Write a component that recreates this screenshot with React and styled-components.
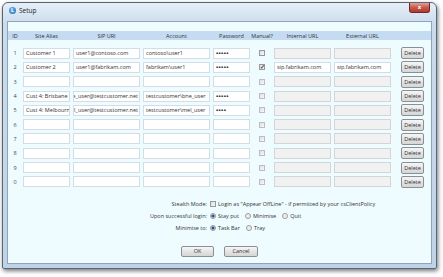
import React from 'react';
import styled, { createGlobalStyle } from 'styled-components';

const GlobalStyle = createGlobalStyle`
  html, body { margin: 0; background: #fff; }
  body { font-family: "Open Sans", "Noto Sans", sans-serif; color: #333; }
`

const COLS = '10px 47px 67px 67px 37px 18px 57px 57px 30px';

const Screen = styled.div`
  width: 443px;
  height: 277px;
  padding: 2px 0 0 2px;
  box-sizing: border-box;
`
const Window = styled.div`
  width: 435px;
  height: 267px;
  box-sizing: border-box;
  border: 1px solid #56677a;
  border-radius: 6px 6px 2px 2px;
  background: linear-gradient(#e6eff8, #cadbeb 22px, #c0d3e6);
  box-shadow: 1px 2px 4px rgba(0, 0, 0, 0.55);
  display: flex;
  flex-direction: column;
  padding: 0 4px 4px 4px;
`
const TitleBar = styled.div`
  height: 18px;
  display: flex;
  align-items: flex-start;
`
const AppIcon = styled.div`
  width: 7px;
  height: 7px;
  margin: 4px 0 0 2px;
  border-radius: 50%;
  background: radial-gradient(circle at 40% 35%, #6fb2e8, #1f6fb8);
  color: #fff;
  font-size: 5px;
  font-weight: bold;
  line-height: 7px;
  text-align: center;
`
const Title = styled.div`
  margin: 3px 0 0 3px;
  font-size: 6.5px;
  line-height: 9px;
  color: #1e1e1e;
`
const CloseBtn = styled.div`
  margin-left: auto;
  margin-right: 2px;
  width: 21px;
  height: 10px;
  box-sizing: border-box;
  border: 1px solid #6e2a26;
  border-top: none;
  border-radius: 0 0 3px 3px;
  background: linear-gradient(#e0a196, #c8584b 50%, #b03a2e);
  color: #fff;
  font-size: 6px;
  font-weight: bold;
  line-height: 9px;
  text-align: center;
`
const Client = styled.div`
  flex: 1;
  border: 1px solid #8ea4bd;
  background: #effcff;
  display: flex;
  flex-direction: column;
`
const HeaderRow = styled.div`
  margin-top: 9px;
  height: 9px;
  background: #c4dbf1;
  display: grid;
  grid-template-columns: ${COLS};
  column-gap: 3px;
  padding-left: 2px;
  align-items: center;
  font-size: 5.5px;
  color: #333;
`
const HeadCell = styled.div`
  justify-self: center;
  white-space: nowrap;
`
const Rows = styled.div`
  padding-top: 7.7px;
  display: grid;
  grid-template-columns: ${COLS};
  grid-auto-rows: 11px;
  column-gap: 3px;
  row-gap: 3.3px;
  padding-left: 2px;
  align-items: center;
  font-size: 5.5px;
`
const Id = styled.div`
  justify-self: center;
  color: #444;
`
const Field = styled.div`
  height: 11px;
  box-sizing: border-box;
  border: 1px solid ${p => (p.$disabled ? '#d3d6d9' : '#d3dde8')};
  background: ${p => (p.$disabled ? '#f1f1f1' : '#fff')};
  padding: 0 1px 0 2px;
  display: flex;
  justify-content: ${p => (p.$scrolled ? 'flex-end' : 'flex-start')};
  align-items: center;
  white-space: nowrap;
  overflow: hidden;
  color: #333;
  letter-spacing: ${p => (p.$dots ? '0.3px' : '0')};
  font-size: ${p => (p.$dots ? '6px' : '5.5px')};
  font-weight: ${p => (p.$dots ? 'bold' : 'normal')};
`
const Caret = styled.span`
  display: inline-block;
  flex: none;
  width: 1px;
  height: 7px;
  background: #111;
`
const Check = styled.div`
  justify-self: center;
  width: 6px;
  height: 6px;
  box-sizing: border-box;
  border: 1px solid ${p => (p.$dim ? '#bdbdbd' : '#999')};
  background: linear-gradient(135deg, #dedede, #f8f8f8);
  position: relative;
`
const Tick = styled.span`
  position: absolute;
  left: 0;
  top: -1px;
  font-size: 6px;
  line-height: 6px;
  font-weight: bold;
  color: #3a3a3a;
`
const Button = styled.div`
  justify-self: end;
  width: ${p => p.$w || 23}px;
  height: ${p => p.$h || 12}px;
  box-sizing: border-box;
  border: 1px solid #8a8f96;
  border-radius: 2px;
  background: linear-gradient(#f6f6f6, #e4e4e4 50%, #d6d6d6);
  font-size: 5.5px;
  line-height: ${p => (p.$h || 12) - 2}px;
  text-align: center;
  color: #333;
`
const Options = styled.div`
  margin-top: 10.6px;
  display: grid;
  grid-template-columns: 199px auto;
  grid-auto-rows: 12px;
  column-gap: 3px;
  align-items: center;
  font-size: 5.5px;
`
const OptLabel = styled.div`
  text-align: right;
  white-space: nowrap;
`
const OptLine = styled.div`
  display: flex;
  align-items: center;
  white-space: nowrap;
`
const Box = styled.span`
  width: 6px;
  height: 6px;
  box-sizing: border-box;
  border: 1px solid #999;
  background: linear-gradient(135deg, #dedede, #f8f8f8);
  margin-right: 2px;
`
const Radio = styled.span`
  width: 6px;
  height: 6px;
  box-sizing: border-box;
  border-radius: 50%;
  border: 1px solid #999;
  background: ${p => (p.$on
    ? 'radial-gradient(circle, #2f4f7a 0 1.4px, #9bb6d8 1.6px 2px, #eee 2.2px)'
    : 'radial-gradient(circle, #e8e8e8, #fafafa)')};
  margin-right: 2px;
`
const Choice = styled.span`
  display: inline-flex;
  align-items: center;
  margin-right: 6px;
`
const Footer = styled.div`
  margin-top: 12px;
  display: flex;
  justify-content: center;
  gap: 10px;
`

const rows = [
  { id: '1', alias: 'Customer 1', sip: 'user1@contoso.com', acct: 'contoso\\user1', pw: '•••••' },
  { id: '2', alias: 'Customer 2', sip: 'user1@fabrikam.com', acct: 'fabrikam\\user1', pw: '•••••', manual: true, int: 'sip.fabrikam.com', ext: 'sip.fabrikam.com' },
  { id: '3' },
  { id: '4', alias: 'Cust 4: Brisbane', sip: 'e_user@testcustomer.net', scrolled: true, acct: 'testcustomer\\bne_user', pw: '•••••' },
  { id: '5', alias: 'Cust 4: Melbourn', caret: true, sip: 'l_user@testcustomer.net', scrolled: true, acct: 'testcustomer\\mel_user', pw: '••••' },
  { id: '6' },
  { id: '7' },
  { id: '8' },
  { id: '9' },
  { id: '0' },
];

const headers = ['ID', 'Site Alias', 'SIP URI', 'Account', 'Password', 'Manual?', 'Internal URL', 'External URL', ''];

export default function App() {
  return (
    <Screen>
      <GlobalStyle />
      <Window>
        <TitleBar>
          <AppIcon>L</AppIcon>
          <Title>Setup</Title>
          <CloseBtn>x</CloseBtn>
        </TitleBar>
        <Client>
          <HeaderRow>
            {headers.map((h, i) => <HeadCell key={i}>{h}</HeadCell>)}
          </HeaderRow>
          <Rows>
            {rows.map(r => (
              <React.Fragment key={r.id}>
                <Id>{r.id}</Id>
                <Field>{r.alias}{r.caret && <Caret />}</Field>
                <Field $scrolled={r.scrolled}>{r.sip}</Field>
                <Field>{r.acct}</Field>
                <Field $dots>{r.pw}</Field>
                <Check $dim={r.id !== '1' && !r.manual}>{r.manual && <Tick>✓</Tick>}</Check>
                <Field $disabled={!r.manual}>{r.int}</Field>
                <Field $disabled={!r.manual}>{r.ext}</Field>
                <Button>Delete</Button>
              </React.Fragment>
            ))}
          </Rows>
          <Options>
            <OptLabel>Stealth Mode:</OptLabel>
            <OptLine><Box />Login as "Appear OffLine" - if permitted by your csClientPolicy</OptLine>
            <OptLabel>Upon successful login:</OptLabel>
            <OptLine>
              <Choice><Radio $on />Stay put</Choice>
              <Choice><Radio />Minimise</Choice>
              <Choice><Radio />Quit</Choice>
            </OptLine>
            <OptLabel>Minimise to:</OptLabel>
            <OptLine>
              <Choice><Radio $on />Task Bar</Choice>
              <Choice><Radio />Tray</Choice>
            </OptLine>
          </Options>
          <Footer>
            <Button $w={33} $h={11}>OK</Button>
            <Button $w={34} $h={11}>Cancel</Button>
          </Footer>
        </Client>
      </Window>
    </Screen>
  );
}
